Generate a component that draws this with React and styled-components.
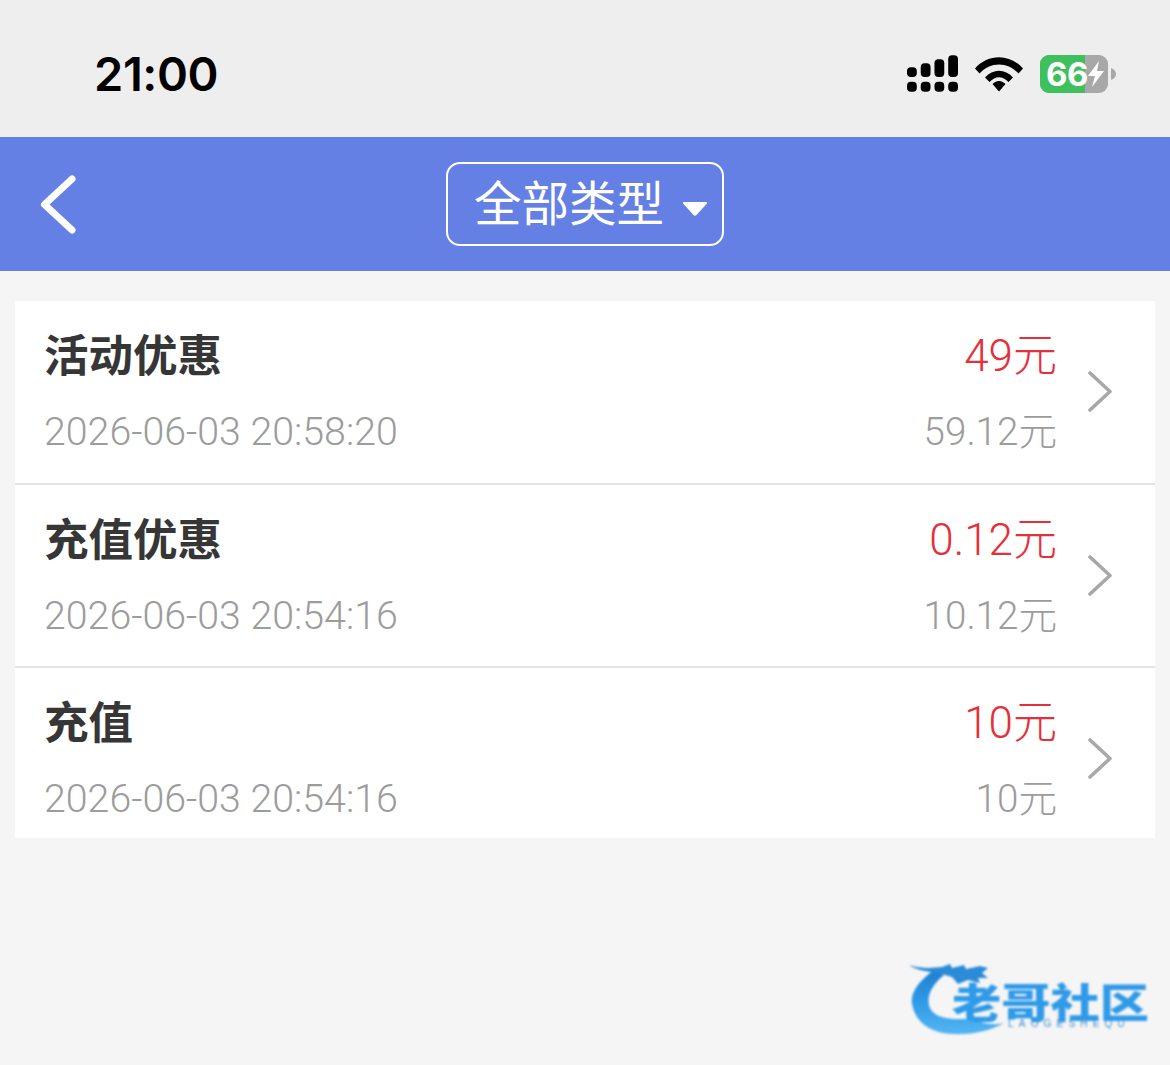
import React from "react";
import styled, { createGlobalStyle } from "styled-components";

const Global = createGlobalStyle`
  html, body { margin: 0; padding: 0; background: #f5f5f6; }
  * { box-sizing: border-box; }
  body { font-family: "Noto Sans", "Noto Sans CJK SC", sans-serif; }
`;
const Page = styled.div`
  width: 1170px; height: 1065px; background: #f5f5f6; display: flex; flex-direction: column; overflow: hidden;
`;
const StatusBar = styled.div`
  height: 137px; flex: none; background: #eeeeee; display: flex; align-items: center; justify-content: space-between;
  padding: 20px 54px 10px 94px;
`;
const Clock = styled.div`
  font-family: Inter, sans-serif; font-weight: 600; font-size: 47px; line-height: 54px; color: #000; letter-spacing: -0.4px;
`;
const StatusIcons = styled.div`
  display: flex; align-items: center; gap: 17px;
`;
const Battery = styled.div`
  width: 68px; height: 38px; border-radius: 9px; overflow: hidden; display: flex; background: #a8a8a8;
  color: #fff; font-family: Inter, sans-serif; font-weight: 700; font-size: 33px; line-height: 38px;
`;
const BatteryFill = styled.div`
  width: 45px; background: #3fc05d; padding-left: 6px; letter-spacing: -0.5px; flex: none; white-space: nowrap;
`;
const BatteryWrap = styled.div`
  display: flex; align-items: center; gap: 3px;
`;
const Header = styled.div`
  height: 134px; flex: none; background: #6480e5; display: flex; align-items: center; justify-content: center;
  position: relative;
`;
const Back = styled.svg`
  position: absolute; left: 39px; top: 38px;
`;
const Filter = styled.div`
  width: 278px; height: 84px; margin-top: -1px; border: 2px solid #fff; border-radius: 14px; color: #fff;
  display: flex; align-items: center; padding-left: 26px; gap: 18px;
  font-size: 47.5px; font-family: "Noto Sans CJK SC", sans-serif; font-weight: 400; line-height: 1;
`;
const FilterLabel = styled.span`
  display: block; margin-top: -5px;
`;
const Caret = styled.svg`
  margin-top: 11px;
`;
const List = styled.div`
  margin: 30px 15px 0; background: #fff;
`;
const Row = styled.div`
  height: ${p => p.$h}px; padding: 0 42px 0 29px; display: flex; align-items: flex-start;
  ${p => p.$line && "border-bottom: 2px solid #e5e5e6;"}
`;
const Main = styled.div`
  flex: 1; padding-top: 24px; display: flex; flex-direction: column;
`;
const Line = styled.div`
  display: flex; justify-content: space-between; align-items: flex-start;
`;
const Title = styled.div`
  font-family: "Noto Sans CJK SC", sans-serif; font-weight: 700; font-size: 44.5px; line-height: 56px; color: #363636;
`;
const Amount = styled.div`
  font-family: Roboto, "Noto Sans CJK SC", sans-serif; font-size: 44px; height: 56px; line-height: 62px; color: #e52f3b; font-weight: 300;
`;
const Stamp = styled.div`
  margin-top: 26px; font-family: Roboto, sans-serif; font-weight: 300; font-size: 39.3px; line-height: 50px; color: #9c9c9c;
`;
const Balance = styled(Stamp)`
  font-family: Roboto, "Noto Sans CJK SC", sans-serif; font-size: 38.6px;
`;
const Arrow = styled.svg`
  flex: none; margin: 70px 0 0 30px;
`;
const Footer = styled.div`
  flex: 1; display: flex; justify-content: flex-end; align-items: flex-start; padding: 122px 18px 0 0;
`;
const Logo = styled.div`
  position: relative; width: 244px; height: 78px; filter: blur(0.9px);
`;
const LogoSwirl = styled.svg`
  position: absolute; left: 0; top: 0;
`;
const LogoName = styled.div`
  position: absolute; left: 44px; top: 22px; height: 36px; font-family: "Noto Sans CJK SC", sans-serif; font-weight: 900; font-size: 46px;
  line-height: 36px; color: #2f9ae8; white-space: nowrap; transform: scale(1.07, 0.88); transform-origin: left center;
`;
const LogoPinyin = styled.div`
  position: absolute; left: 100px; top: 58px; font-family: "Liberation Sans", sans-serif; font-size: 10px; line-height: 12px;
  letter-spacing: 5.2px; color: #3f8fce; white-space: nowrap;
`;

const rows = [
  { title: "活动优惠", amount: "49元", time: "2026-06-03 20:58:20", balance: "59.12元", h: 184, line: true },
  { title: "充值优惠", amount: "0.12元", time: "2026-06-03 20:54:16", balance: "10.12元", h: 183, line: true },
  { title: "充值", amount: "10元", time: "2026-06-03 20:54:16", balance: "10元", h: 170, line: false },
];

export default function App() {
  return (
    <Page>
      <Global />
      <StatusBar>
        <Clock>21:00</Clock>
        <StatusIcons>
          <svg width="51" height="38" viewBox="0 0 52 38" fill="#000">
            <rect x="0" y="12" width="10" height="10" rx="4" />
            <rect x="14" y="8" width="10" height="14" rx="4" />
            <rect x="28" y="4" width="10" height="18" rx="4" />
            <rect x="42" y="0" width="10" height="22" rx="4" />
            <rect x="0" y="27" width="10" height="10" rx="4" />
            <rect x="14" y="27" width="10" height="10" rx="4" />
            <rect x="28" y="27" width="10" height="10" rx="4" />
            <rect x="42" y="27" width="10" height="10" rx="4" />
          </svg>
          <svg width="48" height="36" viewBox="0 0 48 36" fill="#000">
            <path d="M0 12.5 C13 -2.5 35 -2.5 48 12.5 L43.5 17.5 C32.5 5.5 15.5 5.5 4.5 17.5 Z" />
            <path d="M10 21.5 C18 12.5 30 12.5 38 21.5 L33.5 26 C27.5 19.5 20.5 19.5 14.5 26 Z" />
            <path d="M17.5 28 C21.5 24 26.5 24 30.5 28 L24 35.5 Z" />
          </svg>
          <BatteryWrap>
            <Battery>
              <BatteryFill>66</BatteryFill>
              <svg width="23" height="38" viewBox="0 0 23 38" fill="#fff">
                <path d="M14 6 L3 21 L10 21 L7 32 L19 16 L12 16 Z" />
              </svg>
            </Battery>
            <svg width="5" height="12" viewBox="0 0 5 12" fill="#a8a8a8"><path d="M0 0 C3 1 5 3 5 6 C5 9 3 11 0 12 Z" /></svg>
          </BatteryWrap>
        </StatusIcons>
      </StatusBar>
      <Header>
        <Back width="38" height="60" viewBox="0 0 38 60" fill="none" stroke="#fff" strokeWidth="7" strokeLinecap="round" strokeLinejoin="round">
          <path d="M33 4 L5.5 29.5 L33 55" />
        </Back>
        <Filter>
          <FilterLabel>全部类型</FilterLabel>
          <Caret width="26" height="16" viewBox="0 0 26 16" fill="#fff"><path d="M2 1 H24 Q26 1 24.5 3 L14.5 14 Q13 15.5 11.5 14 L1.5 3 Q0 1 2 1 Z" /></Caret>
        </Filter>
      </Header>
      <List>
        {rows.map(r => (
          <Row key={r.time + r.title} $h={r.h} $line={r.line}>
            <Main>
              <Line>
                <Title>{r.title}</Title>
                <Amount>{r.amount}</Amount>
              </Line>
              <Line>
                <Stamp>{r.time}</Stamp>
                <Balance>{r.balance}</Balance>
              </Line>
            </Main>
            <Arrow width="26" height="42" viewBox="0 0 26 42" fill="none" stroke="#a8a8a8" strokeWidth="3.6" strokeLinecap="round" strokeLinejoin="round">
              <path d="M3 2 L23 20.5 L3 39" />
            </Arrow>
          </Row>
        ))}
      </List>
      <Footer>
        <Logo>
          <LogoSwirl width="110" height="78" viewBox="0 0 110 78">
            <defs>
              <linearGradient id="swirl" x1="0" y1="0" x2="0" y2="1">
                <stop offset="0" stopColor="#1f7fd0" />
                <stop offset="0.5" stopColor="#2f9ae8" />
                <stop offset="1" stopColor="#55b6f2" />
              </linearGradient>
            </defs>
            <path d="M26 10 C12 20 2 32 4 44 C7 62 22 73 44 74 C64 75 82 71 96 63 C84 66 72 63 65 58 C50 60 30 60 23 50 C17 40 22 26 36 15 Z" fill="url(#swirl)" />
            <path d="M1 5 C14 9 24 8 34 7 L42 4 L44 8 L56 5 L58 9 L72 6 L80 8 L74 13 L80 18 L70 18 L72 23 L60 20 L50 24 L44 17 L30 13 C20 12 8 10 1 5 Z" fill="#2a8bd8" />
          </LogoSwirl>
          <LogoName>老哥社区</LogoName>
          <LogoPinyin>LAOGESHEQU</LogoPinyin>
        </Logo>
      </Footer>
    </Page>
  );
}
